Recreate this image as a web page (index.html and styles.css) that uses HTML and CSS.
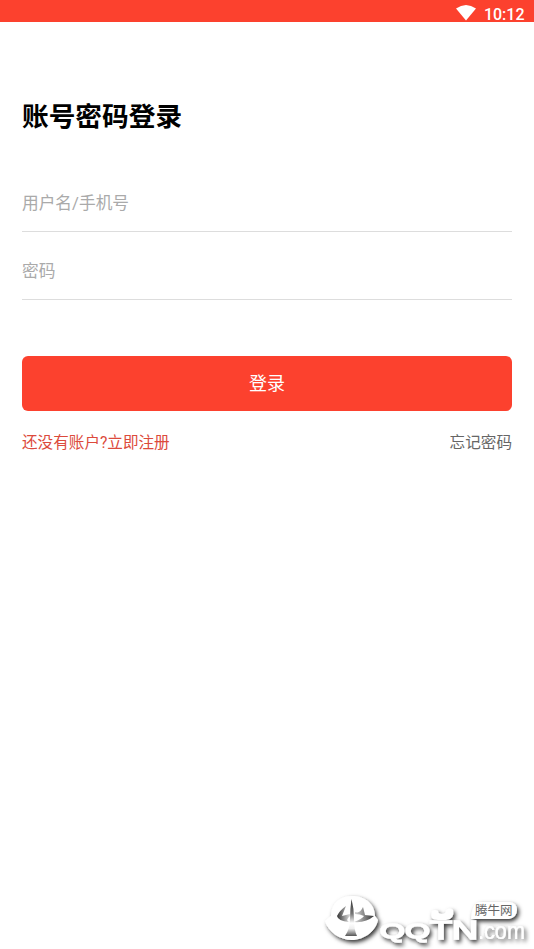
FILE: index.html
```html
<!DOCTYPE html>
<html lang="zh-CN">
<head>
<meta charset="utf-8">
<title>账号密码登录</title>
<link rel="stylesheet" href="styles.css">
</head>
<body>
<header class="status">
  <svg class="wifi" width="20" height="16" viewBox="0 0 20 16"><path d="M0 3.5Q10-3.5 20 3.5L10 15.5Z" fill="#fff"/></svg>
  <span class="clock">10:12</span>
</header>
<main class="login">
  <h1>账号密码登录</h1>
  <div class="field">用户名/手机号</div>
  <div class="field">密码</div>
  <button class="submit">登录</button>
  <nav class="links"><a class="register">还没有账户?立即注册</a><a class="forgot">忘记密码</a></nav>
</main>
<svg class="watermark" width="220" height="64" viewBox="0 0 220 64">
  <defs>
    <filter id="shade" x="-10%" y="-20%" width="120%" height="150%"><feDropShadow dx="2" dy="2.5" stdDeviation="2" flood-color="#000" flood-opacity=".8"/></filter>
    <linearGradient id="metal" x1="0" y1="0" x2="0" y2="1"><stop offset="0" stop-color="#333"/><stop offset=".4" stop-color="#777"/><stop offset=".65" stop-color="#fff"/><stop offset=".8" stop-color="#eee"/><stop offset="1" stop-color="#555"/></linearGradient>
    <linearGradient id="wingLeft" x1="0" y1="0" x2="1" y2="0"><stop offset="0" stop-color="#333"/><stop offset="1" stop-color="#ddd"/></linearGradient>
    <linearGradient id="wingRight" x1="0" y1="0" x2="1" y2="0"><stop offset="0" stop-color="#ddd"/><stop offset="1" stop-color="#333"/></linearGradient>
  </defs>
  <g filter="url(#shade)" fill="#fff">
    <path d="M17 31C17 18 26 11 38 11C51 11 61 19 61 31L64 35C62 46 50 55 38 55S14 47 11 36Z"/>
    <path d="M118 26Q115 35 124 35H132Q141 34 139 25Q136 22 132 25Q132 29 128 29T124 26Q121 24 118 26Z"/>
    <path d="M165 17H196Q203 18 203 25T195 34H157Q158 19 165 17Z"/>
    <text class="brand small" x="66" y="53" textLength="50" lengthAdjust="spacingAndGlyphs">QQ</text>
    <text class="brand" x="116" y="54" textLength="48" lengthAdjust="spacingAndGlyphs">TN</text>
    <text class="domain" x="164" y="54" textLength="47" lengthAdjust="spacingAndGlyphs">.com</text>
  </g>
  <path d="M37.500 14Q40 23 40 34T43 51H31Q36 44 36 34T37.500 14Z" fill="url(#metal)"/>
  <path d="M23 31Q26 25 32 21L28 31L36 29V31Q31 35 35 37Q24 36 23 31Z" fill="url(#wingLeft)"/>
  <path d="M41 27Q46 29 49 22L51 30L60 31Q52 38 40 37Q48 34 50 31Q46 29 41 29Z" fill="url(#wingRight)"/>
  <text class="site" x="161" y="30">腾牛网</text>
</svg>
</body>
</html>
```
FILE: styles.css
```css
* { box-sizing: border-box; }
body { margin: 0; height: 949px; overflow: hidden; background: #fff; font-family: Roboto, "Noto Sans CJK SC", sans-serif; }
.status { height: 22px; background: #fc412e; display: flex; justify-content: flex-end; gap: 8px; padding: 5px 9.500px 0 0; }
.wifi { flex: none; }
.clock { color: #fff; font-size: 16px; line-height: 20px; font-weight: 500; }
.login { padding: 75px 22px 0; }
h1 { margin: 0 0 27px; font-size: 26.7px; line-height: 40px; font-weight: 700; color: #000; }
.field { height: 68px; padding-top: 28px; font-size: 16.7px; line-height: 24px; color: #aaa; border-bottom: 1px solid #ddd; }
.submit { display: block; width: 100%; height: 55px; margin-top: 56px; padding: 0 0 3px; border: 0; border-radius: 6px; background: #fc412e; color: #fff; font: inherit; font-size: 18px; }
.links { display: flex; justify-content: space-between; margin-top: 20px; font-size: 15.6px; line-height: 24px; }
.register { color: #dc4a3c; }
.forgot { color: #666; }
.watermark { position: absolute; left: 314px; top: 885px; }
.brand { font: 400 25px "Liberation Sans", sans-serif; stroke: #fff; stroke-width: 1.5px; }
.small { font-size: 21px; }
.domain { font: 400 23px "Liberation Sans", sans-serif; }
.site { font: 12.5px "Noto Sans CJK SC", sans-serif; fill: #666; }
```
